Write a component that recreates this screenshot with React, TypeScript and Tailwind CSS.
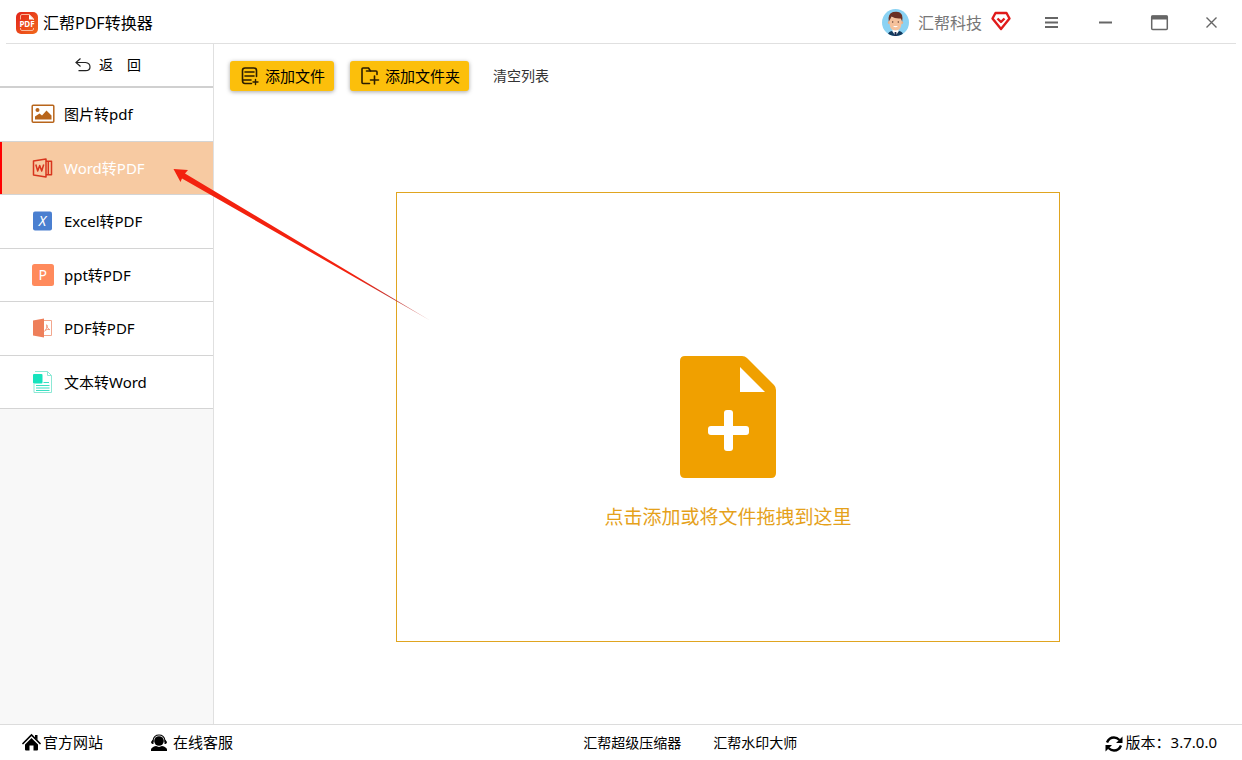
import React, { useState } from 'react';

const LogoIcon = () => (
  <svg className="h-[22px] w-[22px]" viewBox="0 0 22 22">
    <defs>
      <linearGradient id="logo" x1="0" y1="0" x2="1" y2="1">
        <stop offset="0" stopColor="#e2231a" />
        <stop offset="1" stopColor="#f26a1b" />
      </linearGradient>
    </defs>
    <rect width="22" height="22" rx="5" fill="url(#logo)" />
    <path d="M4.500 7.500V4Q4.500 2.500 6 2.500H13.500L17.500 6.500V8M4.500 16V17Q4.500 18.500 6 18.500H16Q17.500 18.500 17.500 17V16" fill="none" stroke="#fbb99b" strokeWidth="1" />
    <path d="M13 2.500L18 7.500H13Z" fill="#fff" />
    <text x="11" y="15" fontSize="8" fontWeight="700" textAnchor="middle" fill="#fff">PDF</text>
  </svg>
);

const AvatarIcon = () => (
  <svg className="h-[27px] w-[27px]" viewBox="0 0 27 27">
    <defs>
      <clipPath id="avatar"><circle cx="13.500" cy="13.500" r="13.500" /></clipPath>
    </defs>
    <g clipPath="url(#avatar)">
      <rect width="27" height="27" fill="#8ad2f3" />
      <path d="M5.500 27Q6 22.500 10 22L13.500 23L17 22Q21 22.500 21.500 27Z" fill="#123a5e" />
      <path d="M10.500 19H16.500V22.500L13.500 27L10.500 22.500Z" fill="#fff" />
      <path d="M12.700 23H14.300L14.800 27H12.200Z" fill="#1c2c50" />
      <circle cx="7.300" cy="13.500" r="1.500" fill="#e8ad86" />
      <circle cx="19.700" cy="13.500" r="1.500" fill="#e8ad86" />
      <path d="M7.500 8H19.500V14.500Q19 21.500 13.500 21.500Q8 21.500 7.500 14.500Z" fill="#f5c19b" />
      <path d="M6.800 12.500Q5.500 4.500 11 3Q18 1.500 20 6Q20.800 8.500 20.200 12.500L18.800 9.500Q13 10 9.500 7.500Q8.500 10 6.800 12.500Z" fill="#6b3022" />
      <circle cx="10.700" cy="13" r="0.700" fill="#59352a" />
      <circle cx="16.300" cy="13" r="0.700" fill="#59352a" />
      <path d="M11 17Q13.500 19.500 16 17Z" fill="#fff" />
    </g>
  </svg>
);

const VipIcon = () => (
  <svg className="mb-1 h-5 w-5" viewBox="0 0 20 20" fill="none" stroke="#e01b1b" strokeWidth="2.400" strokeLinejoin="round">
    <path d="M4.500 2H15.500L18.500 7.500L10 18L1.500 7.500Z" />
    <path d="M6.500 7.500L10 11L13.500 7.500" />
  </svg>
);

const BackIcon = () => (
  <svg className="h-4 w-4" viewBox="0 0 16 16" fill="none" stroke="#222" strokeWidth="1.200">
    <path d="M5.500 1.500L1 5.500L5.500 9.500M1 5.500H10.500Q15 6 15 10Q15 13.700 10.500 13.700H3.500" />
  </svg>
);

const ImageIcon = () => (
  <svg className="h-6 w-6" viewBox="0 0 24 24">
    <rect x="1.200" y="3.200" width="21.600" height="17" rx="1" fill="none" stroke="#b8651b" strokeWidth="1.500" />
    <circle cx="6.500" cy="8" r="2" fill="#b8651b" />
    <path d="M4 17.500V14.500L8.500 11.500L11 13.500L15.500 8.500L20.500 13.500V17.500Z" fill="#b8651b" />
  </svg>
);

const WordIcon = () => (
  <svg className="h-6 w-6" viewBox="0 0 24 24" fill="none" stroke="#d8351d" strokeWidth="1.500" strokeLinejoin="round">
    <path d="M2.500 5L15 3V21L2.500 19ZM15 5.200H20.500V18.800H15M17.300 5.200V18.800" />
    <path d="M4.800 8.500L6.700 15L8.700 9.500L10.700 15L12.700 8.500" />
  </svg>
);

const ExcelIcon = () => (
  <svg className="h-6 w-6" viewBox="0 0 24 24">
    <rect x="2" y="2.500" width="19" height="19" rx="2" fill="#4a7fd0" />
    <text x="11.500" y="17" fontSize="14" fontStyle="italic" textAnchor="middle" fill="#fff">X</text>
  </svg>
);

const PptIcon = () => (
  <svg className="h-6 w-6" viewBox="0 0 24 24">
    <rect x="1" y="1" width="22" height="22" rx="2.500" fill="#ff8a5c" />
    <text x="11.700" y="17" fontSize="14" textAnchor="middle" fill="#fff">P</text>
  </svg>
);

const PdfIcon = () => (
  <svg className="h-6 w-6" viewBox="0 0 24 24">
    <path d="M2 4.500L13 2.500V21.500L2 19.500Z" fill="#ee7f5a" />
    <path d="M13 4.500H20.500V19.500H13" fill="none" stroke="#f2a78e" strokeWidth="1" />
    <path d="M15.500 8.500Q16 12.500 19 14M16 9Q16.500 12 13.500 15.500M14 14.500Q16 12.800 18.500 13.500" fill="none" stroke="#f0967a" strokeWidth="0.900" />
  </svg>
);

const TextIcon = () => (
  <svg className="h-6 w-6" viewBox="0 0 24 24">
    <path d="M4 1.500H16.500L20.500 5.500V22.500H3V14" fill="#fff" stroke="#8ce8d5" strokeWidth="1" />
    <path d="M16.500 1.500V5.500H20.500" fill="none" stroke="#8ce8d5" />
    <rect x="2" y="4" width="9.500" height="9.500" rx="1" fill="#16e3bd" />
    <path d="M12.500 12.500H18M5 15.500H18.500M5 18H18.500M5 20.500H18.500" stroke="#3adfc2" strokeWidth="1.200" />
  </svg>
);

const AddFileIcon = () => (
  <svg className="h-5 w-5" viewBox="0 0 20 20" fill="none" stroke="#2b1d00" strokeWidth="1.600" strokeLinecap="round">
    <path d="M16.500 10.500V4.500Q16.500 2 14 2H5Q2.500 2 2.500 4.500V14.500Q2.500 17.500 5 17.500H11.500" />
    <path d="M5 6H14M5 10H14M3 14H11" />
    <path d="M15.500 13.500V18.500M13 16H18" strokeWidth="1.400" />
  </svg>
);

const AddFolderIcon = () => (
  <svg className="h-5 w-5" viewBox="0 0 20 20" fill="none" stroke="#2b1d00" strokeWidth="1.600" strokeLinecap="round" strokeLinejoin="round">
    <path d="M17 8.500V6Q17 5 16 5H10.500L8.500 2H3Q2 2 2 3V16.500Q2 17.500 3 17.500H9.500" />
    <path d="M10.500 5H6.500" />
    <path d="M14.500 10V18M10.500 14H18.500" />
  </svg>
);

const HomeIcon = () => (
  <svg className="h-[19px] w-[19px]" viewBox="0 0 19 19">
    <path d="M13 2H15.500V7L13 4.500Z" fill="#000" />
    <path d="M1 10.500L9.500 2L18 10.500" fill="none" stroke="#000" strokeWidth="1.700" strokeLinecap="round" />
    <path d="M9.500 5L16 11.500V16.500Q16 17.500 15 17.500H11.500V12.500H7.500V17.500H4Q3 17.500 3 16.500V11.500Z" fill="#000" />
  </svg>
);

const ServiceIcon = () => (
  <svg className="h-[18px] w-[18px]" viewBox="0 0 18 18">
    <circle cx="9" cy="7" r="4.800" fill="#000" />
    <path d="M3 8V6.500Q4 1 9 1Q14 1 15 6.500V8" fill="none" stroke="#000" strokeWidth="1.100" />
    <path d="M2.500 6H3.500V10H2.500Q1 9.500 1 8ZM15.500 6H14.500V10H15.500Q17 9.500 17 8Z" fill="#000" />
    <path d="M1 17V15.500Q1.500 13 6 12L9 13L12 12Q16.500 13 17 15.500V17Z" fill="#000" />
  </svg>
);

const RefreshIcon = () => (
  <svg className="mt-[3px] h-[18px] w-[18px]" viewBox="0 0 18 18">
    <path d="M2 7.500Q4 2.500 9 2.500Q12 2.500 14.500 5M16 10.500Q14 15.500 9 15.500Q6 15.500 3.500 13" fill="none" stroke="#000" strokeWidth="2.400" />
    <path d="M17.500 1.500V8H11ZM0.500 16.500V10H7Z" fill="#000" />
  </svg>
);

const DropFileIcon = () => (
  <svg className="h-[122px] w-24" viewBox="0 0 96 122">
    <path d="M5 0H62Q65 0 67 2L94 29Q96 31 96 34V117Q96 122 91 122H5Q0 122 0 117V5Q0 0 5 0Z" fill="#f0a000" />
    <path d="M60 11V36H85Z" fill="#fff" />
    <rect x="28" y="70" width="41" height="9" rx="3" fill="#fff" />
    <rect x="44" y="54" width="9" height="41" rx="3" fill="#fff" />
  </svg>
);

const menuItems = [
  { label: '图片转pdf', icon: ImageIcon },
  { label: 'Word转PDF', icon: WordIcon },
  { label: 'Excel转PDF', icon: ExcelIcon },
  { label: 'ppt转PDF', icon: PptIcon },
  { label: 'PDF转PDF', icon: PdfIcon },
  { label: '文本转Word', icon: TextIcon },
];

const windowButtons = [
  {
    label: '菜单',
    icon: <path d="M3 5H16M3 9.500H16M3 14H16" strokeWidth="2" />,
  },
  {
    label: '最小化',
    icon: <path d="M3 9.500H16" strokeWidth="2" />,
  },
  {
    label: '最大化',
    icon: (
      <>
        <rect x="1.700" y="3" width="15.600" height="13.500" rx="1" strokeWidth="1.500" />
        <path d="M1.500 4.500H17.500" strokeWidth="4" />
      </>
    ),
  },
  {
    label: '关闭',
    icon: <path d="M4.500 4.500L14.500 14.500M14.500 4.500L4.500 14.500" strokeWidth="1.400" />,
  },
];

const Header: React.FC = () => (
  <header className="mx-[6px] flex h-11 items-center justify-between border-b border-[#e0e0e0] pt-[2px]">
    <div className="flex items-center gap-[5px] pl-[10px]">
      <LogoIcon />
      <h1 className="text-base text-black">汇帮PDF转换器</h1>
    </div>
    <div className="flex items-center">
      <AvatarIcon />
      <span className="mx-[9px] text-base text-[#777]">汇帮科技</span>
      <VipIcon />
      <div className="ml-[13px] flex">
        {windowButtons.map((btn) => (
          <button
            key={btn.label}
            type="button"
            aria-label={btn.label}
            className="flex h-10 w-[54px] items-center justify-center last:w-[50px]"
          >
            <svg
              className="h-[19px] w-[19px]"
              viewBox="0 0 19 19"
              fill="none"
              stroke="#666"
            >
              {btn.icon}
            </svg>
          </button>
        ))}
      </div>
    </div>
  </header>
);

const App: React.FC = () => {
  const [active, setActive] = useState('Word转PDF');

  return (
    <div className="relative flex min-h-screen flex-col bg-white font-['Noto_Sans','Noto_Sans_CJK_SC',sans-serif] text-black">
      <Header />

      <div className="flex flex-1">
        <aside className="w-[214px] shrink-0 border-r border-[#e0e0e0] bg-[#f8f8f8]">
          <button
            type="button"
            className="flex h-11 w-full items-center gap-2 border-b-2 border-[#d0d0d0] bg-white pl-[75px] text-sm"
          >
            <BackIcon />
            <span>返　回</span>
          </button>
          <nav className="flex h-[321px] flex-col">
            {menuItems.map(({ label, icon: Icon }) => (
              <button
                key={label}
                type="button"
                onClick={() => setActive(label)}
                className={`flex flex-1 items-center gap-[9px] border-b border-[#d4d4d4] pl-[31px] text-[15px] ${
                  active === label
                    ? 'bg-[#f7caa2] text-white shadow-[inset_2px_0_0_#ff0000]'
                    : 'bg-white'
                }`}
              >
                <Icon />
                <span>{label}</span>
              </button>
            ))}
          </nav>
        </aside>

        <main className="flex flex-1 flex-col">
          <div className="flex h-[66px] items-center px-4 pb-[2px]">
            <button
              type="button"
              className="flex h-[30px] items-center gap-[5px] rounded-[3px] bg-[#fcbf0b] pr-[9px] pl-[10px] text-[15px] shadow-[0_1px_4px_rgba(0,0,0,0.35)]"
            >
              <AddFileIcon />
              <span>添加文件</span>
            </button>
            <button
              type="button"
              className="ml-4 flex h-[30px] items-center gap-[5px] rounded-[3px] bg-[#fcbf0b] pr-[9px] pl-[10px] text-[15px] shadow-[0_1px_4px_rgba(0,0,0,0.35)]"
            >
              <AddFolderIcon />
              <span>添加文件夹</span>
            </button>
            <button type="button" className="ml-6 text-sm text-[#333]">
              清空列表
            </button>
          </div>

          <button
            type="button"
            className="mx-[182px] my-[82px] flex flex-1 flex-col items-center justify-center gap-6 border border-[#e0a520] pt-[54px] text-[#e5a11a]"
          >
            <DropFileIcon />
            <span className="text-[19px] leading-[30px]">点击添加或将文件拖拽到这里</span>
          </button>
        </main>
      </div>

      <footer className="flex h-9 items-center border-t border-[#dcdcdc] pr-[25px] pl-[22px] text-[15px]">
        <a href="#site" className="flex items-center gap-[2px]">
          <HomeIcon />
          官方网站
        </a>
        <a href="#service" className="ml-[47px] flex items-center gap-[5px]">
          <ServiceIcon />
          在线客服
        </a>
        <div className="flex flex-1 justify-center gap-8 pl-[43px] text-sm">
          <a href="#compress">汇帮超级压缩器</a>
          <a href="#watermark">汇帮水印大师</a>
        </div>
        <div className="flex items-center gap-[3px]">
          <RefreshIcon />
          <span>版本：3.7.0.0</span>
        </div>
      </footer>

      {/* pointer to the selected conversion */}
      <svg
        className="pointer-events-none absolute top-[165px] left-[170px] h-40 w-[264px]"
        viewBox="0 0 264 160"
      >
        <defs>
          <linearGradient id="arrow" x1="0" y1="0" x2="1" y2="1">
            <stop offset="0.700" stopColor="#f3220f" />
            <stop offset="0.850" stopColor="#c43a35" />
            <stop offset="1" stopColor="#c43a35" stopOpacity="0.500" />
          </linearGradient>
        </defs>
        <path d="M3.500 4L18 5L15 8.500L261 156L12 13.500L10.500 17Z" fill="url(#arrow)" />
      </svg>
    </div>
  );
};

export default App;
